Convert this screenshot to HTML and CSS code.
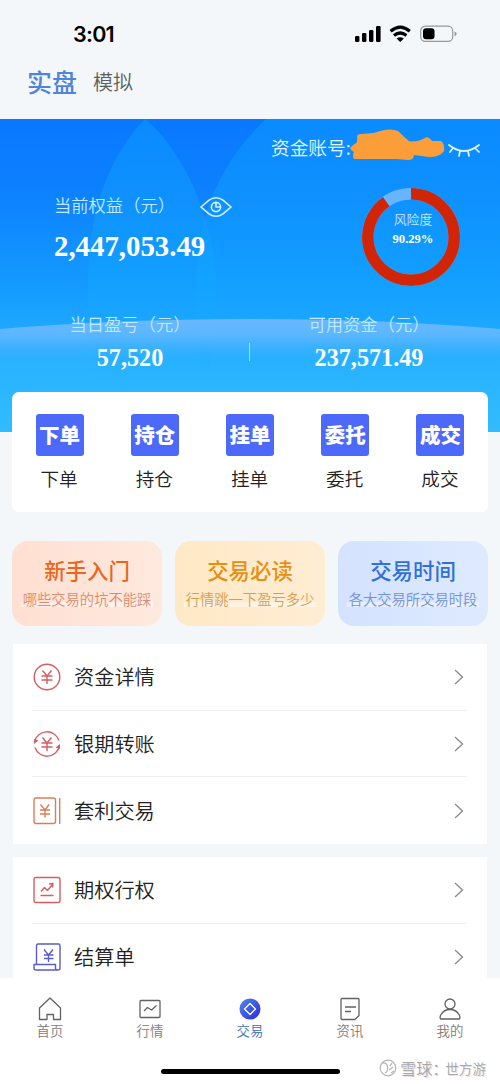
FILE: index.html
```html
<!DOCTYPE html>
<html lang="zh-CN">
<head>
<meta charset="utf-8">
<title>交易</title>
<link rel="stylesheet" href="styles.css">
</head>
<body>
<div class="app">
  <header class="status">
    <span class="clock">3:01</span>
    <svg class="status-icons" width="104" height="18" viewBox="0 0 104 18">
      <rect x="0" y="11" width="4.4" height="6" rx="1.2"/><rect x="7" y="8" width="4.4" height="9" rx="1.2"/><rect x="14" y="5" width="4.4" height="12" rx="1.2"/><rect x="21" y="1" width="4.6" height="16" rx="1.2"/>
      <path class="wifi" d="M35.6 6.2Q45.2-2 54.800 6.200M39 10.500Q45.200 5.500 51.400 10.500"/>
      <path d="M41.600 13.500Q45.200 11 48.800 13.500L45.200 17Z"/>
      <rect class="cell" x="65.7" y="1.2" width="32" height="15.2" rx="4.6"/>
      <rect x="68" y="3.3" width="11.5" height="11" rx="3"/>
      <path class="cap" d="M99.5 6.4q2.2.6 2.2 2.4t-2.2 2.4z"/>
    </svg>
  </header>
  <nav class="modes"><span class="mode-on">实盘</span><span class="mode-off">模拟</span></nav>

  <section class="hero">
    <svg class="hero-bg" width="500" height="313" viewBox="0 0 500 313">
      <defs>
        <linearGradient id="arch" x1="0" y1="0" x2="0" y2="1"><stop offset="0" stop-color="#8abfff" stop-opacity=".72"/><stop offset=".15" stop-color="#80bfff" stop-opacity=".6"/><stop offset=".36" stop-color="#60b8ff" stop-opacity="0"/></linearGradient>
        <linearGradient id="leaf" x1="0" y1="0" x2="0" y2="1"><stop offset="0" stop-color="#0c96ff" stop-opacity=".6"/><stop offset=".6" stop-color="#12a5ff" stop-opacity=".5"/><stop offset="1" stop-color="#20b0ff" stop-opacity="0"/></linearGradient>
      </defs>
      <path fill="url(#leaf)" d="M145 0C108 38 88 95 88 165Q88 240 102 273H203Q216 230 216 165C214 95 180 28 145 0Z"/>
      <path fill="url(#leaf)" d="M266 0C215 48 196 105 196 170Q196 240 204 273H500V0Z"/>
      <path fill="url(#arch)" d="M0 210Q115 200 250 200T500 210V313H0Z"/>
    </svg>
    <div class="account">
      <span>资金账号:</span>
      <svg width="132" height="34" viewBox="0 0 132 34">
        <path fill="#fb9d39" d="M2 17L6 14Q8 12 7 8Q7 5 11 5L24 4Q39-2 48 2Q53 7 59 12Q66 14 77 8Q81 10 82 12L91 12Q95 15 94 22Q90 28 79 28L64 26Q64 31 58 31L47 30H4Q2 26 4 23Q-2 20 2 17Z"/>
        <path class="lash" d="M99 16Q114 28 129 16M103 19l-3 4M110 22l-1 5M118 22l1 5M125 19l4 4"/>
      </svg>
    </div>
    <div class="equity">
      <div class="equity-text">
        <div class="label">当前权益（元）
          <svg class="eye" width="34" height="22" viewBox="0 0 34 22"><path d="M2 11L10 4.200Q17-.6 24 4.200L32 11L24 17.800Q17 22.600 10 17.800Z"/><circle cx="17" cy="11" r="4.600"/><path d="M17 7v4h4"/></svg>
        </div>
        <div class="big">2,447,053.49</div>
      </div>
      <div class="risk">
        <svg class="ring" width="98" height="98" viewBox="0 0 98 98"><circle cx="49" cy="49" r="43.200" stroke="#67b5ff"/><circle cx="49" cy="49" r="43.200" stroke="#d12507" pathLength="100" stroke-dasharray="90.290 9.710" transform="rotate(-90 49 49)"/></svg>
        <div class="risk-text"><span>风险度</span><b>90.29%</b></div>
      </div>
    </div>
    <div class="figures">
      <div class="figure"><span class="label">当日盈亏（元）</span><b>57,520</b></div>
      <i class="split"></i>
      <div class="figure"><span class="label">可用资金（元）</span><b>237,571.49</b></div>
    </div>
  </section>

  <section class="quick">
    <div class="quick-item"><b>下单</b><span>下单</span></div>
    <div class="quick-item"><b>持仓</b><span>持仓</span></div>
    <div class="quick-item"><b>挂单</b><span>挂单</span></div>
    <div class="quick-item"><b>委托</b><span>委托</span></div>
    <div class="quick-item"><b>成交</b><span>成交</span></div>
  </section>

  <section class="promos">
    <div class="promo coral"><b>新手入门</b><span>哪些交易的坑不能踩</span></div>
    <div class="promo amber"><b>交易必读</b><span>行情跳一下盈亏多少</span></div>
    <div class="promo blue"><b>交易时间</b><span>各大交易所交易时段</span></div>
  </section>

  <section class="list">
    <div class="row">
      <svg class="icon red" width="28" height="28" viewBox="0 0 28 28"><circle cx="14" cy="14" r="12.800"/><path d="M9.500 7.500L14 13l4.500-5.500M8.500 13h11M8.500 17h11M14 13v8"/></svg>
      <span>资金详情</span><svg class="chev" width="10" height="16" viewBox="0 0 10 16"><path d="M1 1l7.500 7L1 15"/></svg>
    </div>
    <div class="row">
      <svg class="icon red" width="28" height="28" viewBox="0 0 28 28"><path d="M1.500 12A12.700 12.700 0 0 1 26 10.500M26.500 16A12.700 12.700 0 0 1 2 17.500M9.500 7.500L14 13l4.500-5.500M8.500 13h11M8.500 17h11M14 13v8"/><path class="tip" d="M1 9v5l4.500-3.500ZM27 19v-5l-4.500 3.500Z"/></svg>
      <span>银期转账</span><svg class="chev" width="10" height="16" viewBox="0 0 10 16"><path d="M1 1l7.500 7L1 15"/></svg>
    </div>
    <div class="row">
      <svg class="icon orange" width="28" height="28" viewBox="0 0 28 28"><rect x="1" y="1" width="21.500" height="25.500" rx="2"/><path d="M26.700 1v26M7.500 7.500L12 13l4-5.500M7 13h10M7 17h10M12 13v7.500"/></svg>
      <span>套利交易</span><svg class="chev" width="10" height="16" viewBox="0 0 10 16"><path d="M1 1l7.500 7L1 15"/></svg>
    </div>
  </section>

  <section class="list list-cut">
    <div class="row">
      <svg class="icon red" width="28" height="28" viewBox="0 0 28 28"><rect x="1" y="1.500" width="26" height="25" rx="2"/><path d="M7.500 19.500h13M8 15.500l3.500-4 3 3 5-6M16 8l4-.5-.5 4"/></svg>
      <span>期权行权</span><svg class="chev" width="10" height="16" viewBox="0 0 10 16"><path d="M1 1l7.500 7L1 15"/></svg>
    </div>
    <div class="row">
      <svg class="icon indigo" width="28" height="28" viewBox="0 0 28 28"><path d="M3.500 21.500V2.500q0-1.500 1.500-1.500H25.500q1.500 0 1.500 1.500V25q0 2-2 2H3Q1 27 1 25V21.500H22.500V25q0 2 2 2M11 6.500l4.500 5.500 4.500-5.500M11 12h9.500M11 15.500h9.500M15.500 12v7"/></svg>
      <span>结算单</span><svg class="chev" width="10" height="16" viewBox="0 0 10 16"><path d="M1 1l7.500 7L1 15"/></svg>
    </div>
  </section>

  <footer class="bottom">
    <nav class="tabs">
      <div class="tab"><svg width="24" height="24" viewBox="0 0 24 24"><path d="M1.500 11L12 1l10.500 10V22.500H15.500V17.500H9V22.500H1.500Z"/></svg><span>首页</span></div>
      <div class="tab"><svg width="24" height="24" viewBox="0 0 24 24"><rect x="2" y="3.500" width="20" height="17" rx="1"/><path d="M6 14l3.500-3.500 4 2.500 5-4.500"/></svg><span>行情</span></div>
      <div class="tab tab-on"><svg width="24" height="24" viewBox="0 0 24 24"><defs><linearGradient id="coin" x1="0" y1="0" x2="1" y2="1"><stop stop-color="#5288ed"/><stop offset="1" stop-color="#2929df"/></linearGradient></defs><circle cx="12" cy="12" r="10.500" fill="url(#coin)" stroke="none"/><path stroke="#fff" d="M12 6.500l5.500 5.500-5.500 5.500L6.500 12Z"/></svg><span>交易</span></div>
      <div class="tab"><svg width="24" height="24" viewBox="0 0 24 24"><path d="M4 1.500H20q1 0 1 1V18.500L17 22.500H4q-1 0-1-1V2.500q0-1 1-1ZM7 10h11M7 14.500h6"/></svg><span>资讯</span></div>
      <div class="tab"><svg width="24" height="24" viewBox="0 0 24 24"><circle cx="12" cy="7" r="5"/><path d="M2.500 22Q1.500 20 3 17.500Q6 12.500 12 12.500T21 17.500Q22.500 20 21.500 22Z"/></svg><span>我的</span></div>
    </nav>
    <div class="home"></div>
    <div class="mark"><svg width="18" height="18" viewBox="0 0 18 18"><circle cx="9" cy="9" r="7.800"/><path d="M3 4q5-1 5.500 4T6 14M11 7l2-3M10 11l4-3M12 14l3-2"/></svg><span class="brand">雪球：</span><span>世方游</span></div>
  </footer>
</div>
</body>
</html>
```

FILE: styles.css
```css
* { box-sizing: border-box; }
body { margin: 0; background: #f3f7f9; font-family: "Noto Sans CJK SC", sans-serif; font-weight: 350; color: #222; }
svg { display: block; flex: none; }
.app { width: 500px; height: 1084px; overflow: hidden; display: flex; flex-direction: column; }
.app > * { flex: none; }

.status { height: 60px; padding: 14px 41px 0 73px; display: flex; justify-content: space-between; align-items: flex-start; }
.clock { font: 600 21.5px/40px Inter, sans-serif; letter-spacing: -.7px; color: #000; }
.status-icons { margin-top: 11px; }
.wifi { fill: none; stroke: #000; stroke-width: 3.2; }
.cell { fill: none; stroke: #97999b; stroke-width: 1.2; }
.cap { fill: #97999b; }

.modes { height: 59px; padding-left: 27px; display: flex; gap: 16px; line-height: 42px; }
.mode-on { font-size: 25px; font-weight: 500; color: #5083db; }
.mode-off { font-size: 20px; color: #5c5e60; padding-top: 1px; }

.hero { height: 313px; position: relative; background: linear-gradient(#0879ff 0, #0d80ff 22%, #149cff 55%, #29b2ff 78%, #31bcff 100%); color: #fff; display: flex; flex-direction: column; }
.hero > * { flex: none; position: relative; }
.hero > .hero-bg { position: absolute; inset: 0; }
.account { height: 56px; padding: 0 18px 0 271px; display: flex; font-size: 18.7px; line-height: 56px; white-space: nowrap; color: #e6f7ff; }
.account span { width: 79px; }
.account svg { margin-top: 10px; }
.lash { fill: none; stroke: #e2f5ff; stroke-width: 1.7; stroke-linecap: round; }
.equity { height: 132px; padding: 13px 40px 0 54px; display: flex; justify-content: space-between; }
.label { font-size: 17.3px; line-height: 34px; color: #c0eaff; white-space: nowrap; }
.equity-text .label { display: flex; align-items: center; }
.eye { fill: none; stroke: #d8f2ff; stroke-width: 1.6; stroke-linejoin: round; margin: 4px 0 0 24px; }
.big { font: 700 28.8px/44px "Liberation Serif", serif; margin-top: 2px; }
.risk { width: 98px; height: 98px; display: grid; }
.risk > * { grid-area: 1 / 1; }
.ring { fill: none; stroke-width: 11.5; }
.risk-text { display: flex; flex-direction: column; align-items: center; padding: 21px 0 0 4px; font-size: 12.8px; line-height: 20px; color: #c6e8ff; }
.risk-text b { font: 700 12.6px/20px "Liberation Serif", serif; color: #fff; }
.figures { height: 85px; display: flex; padding-left: 11px; align-items: flex-start; }
.figure { width: 238px; display: flex; flex-direction: column; align-items: center; }
.figure b { font: 700 24.2px/32px "Liberation Serif", serif; margin-top: 1px; }
.split { width: 1px; height: 18px; margin-top: 36px; background: #9fdcff; }

.quick { width: 476px; height: 120px; margin: -40px 12px 29px; padding-top: 22px; background: #fff; border-radius: 7px; display: flex; position: relative; }
.quick-item { width: 95.25px; display: flex; flex-direction: column; align-items: center; }
.quick-item b { width: 48px; height: 42px; border-radius: 3px; background: #4d69fa; color: #fff; font-size: 20.5px; font-weight: 900; line-height: 41px; text-align: center; }
.quick-item span { font-size: 18.6px; line-height: 42px; margin: 1px 1px 0 0; }

.promos { display: flex; gap: 13px; padding: 0 12px; height: 85px; margin-bottom: 18px; }
.promo { width: 150px; border-radius: 16px; display: flex; flex-direction: column; align-items: center; padding-top: 14px; white-space: nowrap; }
.promo b { font-size: 21.4px; font-weight: 500; line-height: 30px; }
.promo span { font-size: 14.3px; line-height: 24px; margin-top: 2px; width: 132px; text-align: center; background: linear-gradient(transparent 15px, rgba(255,255,255,.42) 15px, rgba(255,255,255,.42) 20px, transparent 20px); }
.coral { background: linear-gradient(90deg, #ffe0d2, #ffe9de); }
.coral b { color: #e9661d; }
.coral span { color: #da8c70; }
.amber { background: linear-gradient(90deg, #ffe8c5, #ffedd3); }
.amber b { color: #e69012; }
.amber span { color: #d29f5a; }
.blue { background: linear-gradient(90deg, #d4e2ff, #deeaff); }
.blue b { color: #2f70d9; }
.blue span { color: #7292d2; }

.list { width: 474px; height: 200px; margin: 0 13px 13px; padding: 0 20px 0 19px; background: #fff; }
.list-cut { height: 121px; margin-bottom: 0; overflow: hidden; }
.row { height: 66.6px; display: flex; align-items: center; padding-top: 1px; border-bottom: 1px solid #f0f0f1; font-size: 20.2px; }
.row:last-child { border-bottom: 0; }
.row span { margin-left: 13px; flex: 1; line-height: 40px; }
.icon { fill: none; stroke-width: 1.4; stroke-linejoin: round; margin-left: 1px; }
.red { stroke: #d85d61; }
.tip { fill: #d85d61; stroke: none; }
.orange { stroke: #dc7e59; }
.indigo { stroke: #5a5cc9; }
.chev { fill: none; stroke: #8c8d8e; stroke-width: 1.4; margin-right: 3px; }

.bottom { height: 106px; background: #fff; position: relative; display: flex; flex-direction: column; align-items: center; }
.tabs { width: 500px; height: 91px; padding-top: 19px; display: flex; }
.tab { width: 100px; display: flex; flex-direction: column; align-items: center; font-size: 13.4px; line-height: 18px; color: #7c7c7c; }
.tab svg { fill: none; stroke: #626262; stroke-width: 1.3; stroke-linejoin: round; }
.tab-on { color: #3a73b8; }
.home { width: 179px; height: 5px; border-radius: 3px; background: #000; }
.mark { position: absolute; right: 14px; top: 81px; display: flex; line-height: 18px; font-size: 13.6px; color: #a8a8a8; white-space: nowrap; text-shadow: 1px 1px 0 #e4e4e4; }
.mark svg { fill: none; stroke: #b5b5b5; stroke-width: 1.2; margin-right: 3px; }
.brand { width: 45px; font-size: 16px; }
```
